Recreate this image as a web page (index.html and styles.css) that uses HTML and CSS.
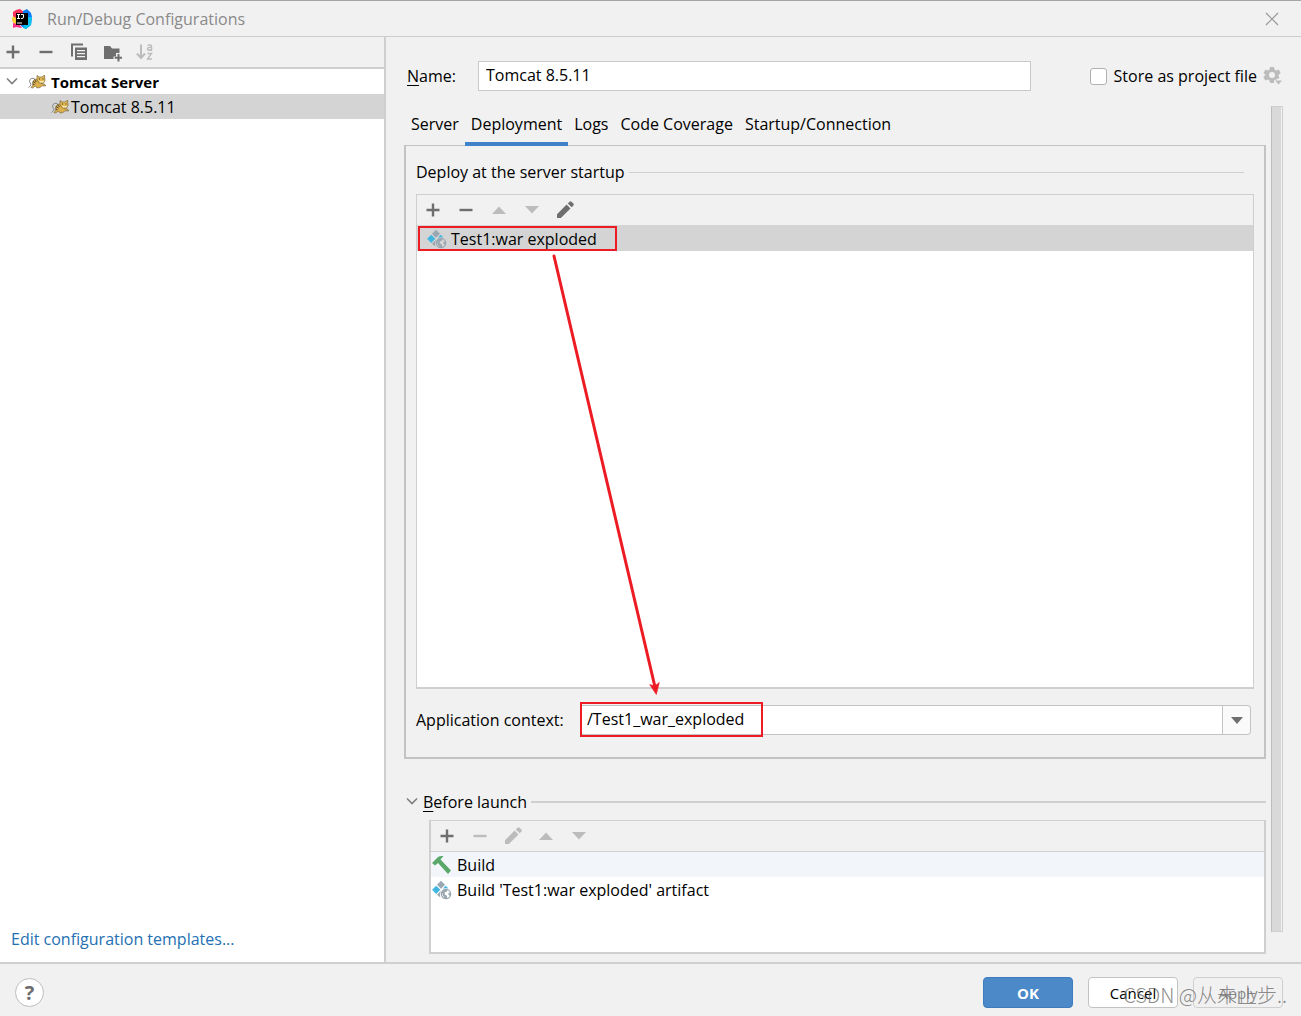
FILE: index.html
```html
<!DOCTYPE html>
<html lang="en">
<head>
<meta charset="utf-8">
<title>Run/Debug Configurations</title>
<link rel="stylesheet" href="styles.css">
</head>
<body>
<svg class="sprite" aria-hidden="true">
  <symbol id="plus" viewBox="0 0 20 20"><path d="M10 3.500v13M3.500 10h13" stroke="currentColor" stroke-width="2.400"/></symbol>
  <symbol id="minus" viewBox="0 0 20 20"><path d="M3.500 10h13" stroke="currentColor" stroke-width="2.400"/></symbol>
  <symbol id="up" viewBox="0 0 20 20"><path d="M3 14l7-7.500 7 7.500z" fill="currentColor"/></symbol>
  <symbol id="down" viewBox="0 0 20 20"><path d="M3 6l7 7.500 7-7.500z" fill="currentColor"/></symbol>
  <symbol id="pencil" viewBox="0 0 20 20"><path d="M2 14.200L11.600 4.600l3.900 3.900L5.900 18H2zM12.800 3.400l1.700-1.700q1-.9 2 0l1.900 1.900q.9 1 0 2l-1.700 1.700z" fill="currentColor"/></symbol>
  <symbol id="chevron" viewBox="0 0 12 12"><path d="M1 2.500l5 5 5-5" fill="none" stroke="currentColor" stroke-width="1.600"/></symbol>
  <symbol id="cat" viewBox="0 0 18 14">
    <path d="M.5 12.500Q3 11 3 9 .5 7 2 4.500 3.500 2.500 6.500 3.500" fill="none" stroke="#8a8a8a" stroke-width="1"/>
    <path d="M3 12.500L5 10 4.500 7 6.500 4.500 9.500 4 10.500 6 13 8 17 9.500 17.500 11 14 10.800 12 12.500 9 13 7.500 11 4.500 13z" fill="#dcb04c" stroke="#6b5a33" stroke-width=".6"/>
    <path d="M9 5L9 .5 11 2h3L16.500 0 17 5.500 15.500 8h-4z" fill="#e2b852" stroke="#6b5a33" stroke-width=".6"/>
    <path d="M5 6.500l2.500 1.500M6.500 4.500l2 2.500M4.500 9l2 .5" stroke="#4b4230" stroke-width="1"/>
    <path d="M11 5.500l2.500 1 2.500-1-1 2h-3z" fill="#fff5ce"/><path d="M11 3.500h1v1h-1zM14.500 3.500h1v1h-1z" fill="#332b1b"/>
  </symbol>
  <symbol id="artifact" viewBox="0 0 20 20">
    <path d="M9 .8l4 4-4 4-4-4z" fill="#9aa7b0"/><path d="M4.200 5.700l4.100 4.100-4.100 4.100L.1 9.800z" fill="#40b6e0"/>
    <path d="M13.700 5.700L16.500 8.400q-3.300-.6-5.600.2z" fill="#40b6e0"/><path d="M9 10.700Q7.500 13 8.200 17.500L5 14.700z" fill="#9aa7b0"/>
    <circle cx="14" cy="14" r="4.700" fill="none" stroke="#9aa7b0" stroke-width="1.200"/>
    <path d="M9.800 12l2.200-2.500 3.500 0-.5 2-2 .7-.5 1.800 2.500 2v2.500l-2.500-.5-1.800-3zM16.500 12.500l2 .5-.3 3-1.700-1z" fill="#9aa7b0"/>
  </symbol>
</svg>

<header class="titlebar">
  <svg class="logo" viewBox="0 0 20 20" aria-hidden="true">
    <path d="M1 3l5-2 4 3-4 12-5-3-1-3 2-2z" fill="#fc801d"/>
    <path d="M1 7l3 1v10l-3-5-1-3z" fill="#ffce37"/>
    <path d="M4 1l4-1 4 3-5 8-6-4V3z" fill="#fe315d"/>
    <path d="M11 2l4-2 4 4 1 4-1 8-5 4-5-3z" fill="#087cfa"/>
    <path d="M15 8l5 0-1 8-5 4-3-1z" fill="#07c3f2"/>
    <path d="M1 14l7 2 2 3-6-1-3 1z" fill="#ff318c"/>
    <path d="M4 4h12v12H4z" fill="#000"/>
    <path d="M5 5.500h3M6.500 5.500v4M5 9.500h3M9 5.500h2.500V8q0 1.500-1.500 1.500H9M5 14h5" fill="none" stroke="#fff" stroke-width="1"/>
  </svg>
  <h1 class="title">Run/Debug Configurations</h1>
  <button class="icon-button close" aria-label="Close"><svg viewBox="0 0 14 14"><path d="M1 1l12 12M13 1L1 13" stroke="currentColor" stroke-width="1.200"/></svg></button>
</header>

<main class="workspace">
  <aside class="sidebar">
    <div class="toolbar sidebar-tools">
      <button class="icon-button" aria-label="Add"><svg><use href="#plus"/></svg></button>
      <button class="icon-button" aria-label="Remove"><svg><use href="#minus"/></svg></button>
      <button class="icon-button" aria-label="Copy"><svg viewBox="0 0 20 20"><path d="M2 1.500h12v2H4v11H2z" fill="currentColor"/><path fill-rule="evenodd" d="M6 5.500h12V18H6zM8 8v1.300h8V8zM8 11v1.300h8V11zM8 14v1.300h8V14z" fill="currentColor"/></svg></button>
      <button class="icon-button" aria-label="New folder"><svg viewBox="0 0 20 20"><path d="M2 4h6l2 2.500h7.500V11H14v3.500h-2.500V17H2z" fill="currentColor"/><path d="M16.500 12v7.500M12.700 15.700h7.300" stroke="currentColor" stroke-width="2"/></svg></button>
      <button class="icon-button" aria-label="Sort configurations" disabled><svg viewBox="0 0 20 20"><path d="M6 2.500v13M2 11.500l4 4.500 4-4.500" fill="none" stroke="currentColor" stroke-width="2"/><path d="M12.500 3.500q4-1.500 4 1V9M16.500 5.500q-4-.5-4 1.700 0 2 4 .3M12.500 11.500h4l-4 5.500h4.500" fill="none" stroke="currentColor" stroke-width="1.400"/></svg></button>
    </div>
    <ul class="tree">
      <li class="tree-row group"><svg class="chevron"><use href="#chevron"/></svg><svg class="cat"><use href="#cat"/></svg><span>Tomcat Server</span></li>
      <li class="tree-row leaf selected"><svg class="cat"><use href="#cat"/></svg><span>Tomcat 8.5.11</span></li>
    </ul>
    <a class="templates" href="#">Edit configuration templates...</a>
  </aside>

  <section class="editor">
    <div class="name-row">
      <label class="name-label" for="name"><u>N</u>ame:</label>
      <input class="name-input" id="name" type="text" value="Tomcat 8.5.11">
      <label class="store"><input class="check" type="checkbox">Store as project file</label>
      <button class="icon-button gear" aria-label="Storage options" disabled><svg viewBox="0 0 20 20"><path fill-rule="evenodd" d="M7 1h4l.5 2.500 1.700 1 2.500-.9 2 3.400-2 1.700v2l1 1-4 2-1.700.9L11 17H7l-.5-2.500-1.700-1-2.500.9-2-3.400 2-1.700V8.500L.5 7l2-3.400 2.400.9 1.600-1zM9 6a3 3 0 1 0 0 6 3 3 0 0 0 0-6z" fill="currentColor"/><path d="M12 14.500h7L15.500 18.500z" fill="currentColor"/></svg></button>
    </div>
    <div class="scroll-area">
      <div class="scroll-content">
        <nav class="tabs" role="tablist">
          <button class="tab" role="tab">Server</button>
          <button class="tab active" role="tab" aria-selected="true">Deployment</button>
          <button class="tab" role="tab">Logs</button>
          <button class="tab" role="tab">Code Coverage</button>
          <button class="tab" role="tab">Startup/Connection</button>
        </nav>
        <div class="panel">
          <h2 class="heading deploy-heading">Deploy at the server startup</h2>
          <div class="list deploy-list">
            <div class="toolbar list-tools">
              <button class="icon-button" aria-label="Add"><svg><use href="#plus"/></svg></button>
              <button class="icon-button" aria-label="Remove"><svg><use href="#minus"/></svg></button>
              <button class="icon-button" aria-label="Move up" disabled><svg><use href="#up"/></svg></button>
              <button class="icon-button" aria-label="Move down" disabled><svg><use href="#down"/></svg></button>
              <button class="icon-button" aria-label="Edit"><svg><use href="#pencil"/></svg></button>
            </div>
            <div class="list-row artifact-row selected"><svg class="row-icon"><use href="#artifact"/></svg><span>Test1:war exploded</span><i class="mark row-mark"></i></div>
            <svg class="arrow" viewBox="0 0 120 450" aria-hidden="true"><path d="M8 6L109 437" stroke="#ed1c24" stroke-width="3" stroke-linecap="round"/><path d="M103.700 434.500l5 1.500 4.600-3.500-3 12z" fill="#ed1c24" stroke="#ed1c24" stroke-width=".6"/></svg>
          </div>
          <div class="context-row">
            <label for="context">Application context:</label>
            <div class="combo">
              <input class="combo-input" id="context" type="text" value="/Test1_war_exploded">
              <button class="combo-button" aria-label="Show contexts"><svg viewBox="0 0 12 7"><path d="M0 0h12L6 7z" fill="currentColor"/></svg></button>
              <i class="mark context-mark"></i>
            </div>
          </div>
        </div>
        <h2 class="heading launch-heading"><svg class="chevron"><use href="#chevron"/></svg><span><u>B</u>efore launch</span></h2>
        <div class="list launch-list">
          <div class="toolbar list-tools ruled">
            <button class="icon-button" aria-label="Add"><svg><use href="#plus"/></svg></button>
            <button class="icon-button" aria-label="Remove" disabled><svg><use href="#minus"/></svg></button>
            <button class="icon-button" aria-label="Edit" disabled><svg><use href="#pencil"/></svg></button>
            <button class="icon-button" aria-label="Move up" disabled><svg><use href="#up"/></svg></button>
            <button class="icon-button" aria-label="Move down" disabled><svg><use href="#down"/></svg></button>
          </div>
          <div class="list-row tinted"><svg class="row-icon" viewBox="0 0 20 20"><path d="M0 8L6 2q2-1.500 5.500-1L8.500 4.500l10.500 11-3 3.500L6 8 3 10.500z" fill="#59a869"/></svg><span>Build</span></div>
          <div class="list-row"><svg class="row-icon"><use href="#artifact"/></svg><span>Build 'Test1:war exploded' artifact</span></div>
        </div>
      </div>
      <div class="scrollbar"></div>
    </div>
  </section>
</main>

<footer class="footer">
  <button class="help" aria-label="Help">?</button>
  <div class="actions">
    <button class="button primary">OK</button>
    <button class="button">Cancel</button>
    <button class="button" disabled>Apply</button>
    <span class="watermark">CSDN @从未止步..</span>
  </div>
</footer>
</body>
</html>
```
FILE: styles.css
```css
* { box-sizing: border-box; }

body {
  margin: 0;
  min-height: 100vh;
  display: flex;
  flex-direction: column;
  background: #f1f1f1;
  color: #000;
  font: 16px/24px "Open Sans", "Noto Sans CJK SC", sans-serif;
}

button, input { font: inherit; color: inherit; margin: 0; }
svg { display: block; flex: none; }
.sprite { position: absolute; width: 0; height: 0; }

.icon-button {
  width: 20px;
  height: 20px;
  padding: 0;
  border: 0;
  background: none;
  color: #6e6e6e;
}
.icon-button svg { width: 20px; height: 20px; }
.icon-button:disabled { color: #bcbcbc; }

/* Title bar */
.titlebar {
  display: flex;
  align-items: center;
  gap: 15px;
  height: 37px;
  padding: 0 22px 0 12px;
  border-top: 1px solid #a5a5a5;
  border-bottom: 1px solid #cdcdcd;
}
.logo { width: 20px; height: 20px; }
.title { margin: 0; font-size: 16px; font-weight: 400; color: #8a8a8a; }
.titlebar .close { width: 14px; height: 14px; margin-left: auto; color: #999; }
.close svg { width: 14px; height: 14px; }

/* Configuration tree */
.workspace { flex: 1; display: flex; border-bottom: 2px solid #cfcfcf; }
.sidebar {
  flex: 0 0 386px;
  display: flex;
  flex-direction: column;
  border-right: 2px solid #cfcfcf;
  background: #fff;
}
.toolbar { display: flex; align-items: center; gap: 13px; background: #f1f1f1; }
.sidebar-tools { height: 32px; padding-left: 3px; border-bottom: 2px solid #cfcfcf; }
.tree { list-style: none; margin: 0; padding: 0; }
.tree-row { display: flex; align-items: center; height: 25px; }
.group { padding-left: 6px; font-size: 15px; font-weight: 700; }
.group .cat { margin: 0 5px 0 10px; }
.leaf { padding-left: 51px; gap: 2px; }
.chevron { width: 12px; height: 12px; color: #7f7f7f; }
.cat { width: 18px; height: 14px; }
.selected { background: #d4d4d4; }
.templates { margin: auto 0 11px 11px; color: #2470b3; text-decoration: none; }

/* Editor */
.editor { flex: 1; min-width: 0; display: flex; flex-direction: column; padding: 24px 18px 8px; }
.name-row { display: flex; align-items: center; height: 30px; padding-left: 3px; }
.name-label { width: 71px; }
u { text-underline-offset: 3px; }
.name-input { flex: 1; min-width: 0; height: 30px; padding: 0 7px 2px; border: 1px solid #c9c9c9; background: #fff; }
.store { display: flex; align-items: center; gap: 7px; margin-left: 59px; }
.check {
  appearance: none;
  width: 17px;
  height: 17px;
  border: 1px solid #b0b0b0;
  border-radius: 3px;
  background: #fff;
}
.gear { margin-left: 6px; }
.scroll-area { flex: 1; display: flex; gap: 5px; margin-top: 15px; }
.scroll-content { flex: 1; min-width: 0; display: flex; flex-direction: column; }
.scrollbar {
  width: 12px;
  margin-bottom: 22px;
  border: 1px solid #cfcfcf;
  border-left-color: #bdbdbd;
  background: #d9d9d9;
  box-shadow: inset -1px 0 #f1f1f1;
}

.tabs { display: flex; height: 40px; }
.tab { height: 40px; padding: 0 6px; border: 0; border-bottom: 4px solid transparent; background: none; }
.tab:first-child { padding-left: 7px; }
.tab.active { position: relative; z-index: 1; border-color: #4083c9; }

.panel {
  flex: 1;
  display: flex;
  flex-direction: column;
  margin-top: -1px;
  padding: 14px 10px 22px;
  border: 2px solid #c3c3c3;
  border-top-width: 1px;
}

.heading { display: flex; align-items: center; margin: 0; font-size: 16px; font-weight: 400; }
.heading::after { content: ""; flex: 1; margin-left: 4px; border-top: 1px solid #cfcfcf; }
.deploy-heading { margin-right: 10px; }
.launch-heading { margin-top: 31px; padding-left: 2px; }
.launch-heading .chevron { margin-right: 5px; }
.launch-heading::after { border-top-width: 2px; }

.list { border: 1px solid #cfcfcf; background: #fff; }
.list-tools { height: 30px; padding-left: 6px; }
.list-row { display: flex; align-items: center; gap: 5px; height: 25px; padding-left: 1px; }
.row-icon { width: 20px; height: 20px; }
.deploy-list { flex: 1; position: relative; margin-top: 10px; border-bottom-width: 2px; }
.artifact-row { position: relative; height: 26px; gap: 4px; padding: 2px 0 0 10px; }
.launch-list { height: 134px; margin: 6px 0 0 25px; border-width: 1px 2px 2px; }
.ruled { height: 31px; border-bottom: 1px solid #cfcfcf; }
.tinted { background: #f2f5fa; }

.context-row { display: flex; align-items: center; margin: 16px 3px 0 0; }
.context-row label { width: 164px; }
.combo { position: relative; flex: 1; display: flex; height: 30px; }
.combo-input { flex: 1; min-width: 0; padding: 0 6px 2px; border: 1px solid #c3c3c3; background: #fff; }
.combo-button {
  display: grid;
  place-items: center;
  width: 28px;
  padding: 0;
  border: 1px solid #c3c3c3;
  border-left: 0;
  border-radius: 0 4px 4px 0;
  background: #fafafa;
  color: #6e6e6e;
}
.combo-button svg { width: 12px; height: 7px; }

/* Red call-outs drawn over the form */
.mark { position: absolute; border: 2px solid #ed1c24; }
.row-mark { left: 1px; top: 1px; width: 199px; height: 25px; }
.context-mark { left: 0; top: -3px; width: 183px; height: 35px; }
.arrow { position: absolute; left: 129px; top: 55px; width: 120px; height: 450px; }

/* Footer */
.footer { display: flex; align-items: center; justify-content: space-between; height: 52px; padding: 5px 18px 0 15px; }
.help {
  width: 29px;
  height: 29px;
  padding: 0;
  border: 1px solid #bdbdbd;
  border-radius: 50%;
  background: #fff;
  color: #6e6e6e;
  font-size: 20px;
  font-weight: 700;
  line-height: 26px;
}
.actions { position: relative; display: flex; gap: 15px; }
.button { width: 90px; height: 31px; padding: 0; border: 1px solid #c3c3c3; border-radius: 4px; background: #fff; font-size: 15px; }
.button.primary { border-color: #3f7cbd; background: #4b89c9; color: #fff; font-weight: 700; }
.button:disabled { border-color: #cfcfcf; background: #f1f1f1; color: #8c8c8c; }
.watermark {
  position: absolute;
  right: -4px;
  top: 5px;
  color: rgba(110, 110, 110, .8);
  font: 300 20px/26px "Noto Sans CJK SC", sans-serif;
  white-space: nowrap;
  pointer-events: none;
}
```
